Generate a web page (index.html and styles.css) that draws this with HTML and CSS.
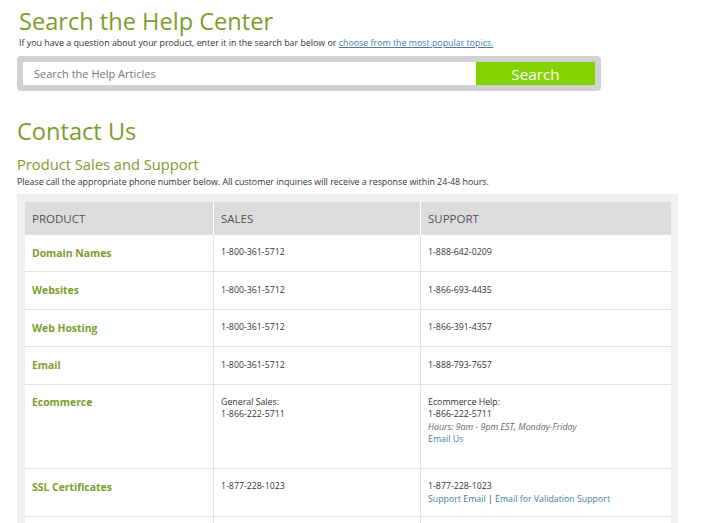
FILE: index.html
```html
<!DOCTYPE html>
<html>
<head>
<meta charset="utf-8">
<link rel="stylesheet" href="styles.css">
</head>
<body>
<div class="page">
  <h1 class="title">Search the Help Center</h1>
  <p class="intro">If you have a question about your product, enter it in the search bar below or <a href="#">choose from the most popular topics.</a></p>
  <div class="search">
    <div class="search-input">Search the Help Articles</div>
    <div class="search-btn">Search</div>
  </div>

  <h2 class="contact">Contact Us</h2>
  <h3 class="sub">Product Sales and Support</h3>
  <p class="note">Please call the appropriate phone number below. All customer inquiries will receive a response within 24-48 hours.</p>

  <div class="table-wrap">
    <table class="tbl">
      <thead>
        <tr><th class="c1">PRODUCT</th><th class="c2">SALES</th><th class="c3">SUPPORT</th></tr>
      </thead>
      <tbody>
        <tr><td class="prod">Domain Names</td><td>1-800-361-5712</td><td>1-888-642-0209</td></tr>
        <tr><td class="prod">Websites</td><td>1-800-361-5712</td><td>1-866-693-4435</td></tr>
        <tr><td class="prod">Web Hosting</td><td>1-800-361-5712</td><td>1-866-391-4357</td></tr>
        <tr><td class="prod">Email</td><td>1-800-361-5712</td><td>1-888-793-7657</td></tr>
        <tr class="tall"><td class="prod">Ecommerce</td><td>General Sales:<br>1-866-222-5711</td><td>Ecommerce Help:<br>1-866-222-5711<br><em>Hours: 9am - 9pm EST, Monday-Friday</em><br><a href="#">Email Us</a></td></tr>
        <tr class="mid"><td class="prod">SSL Certificates</td><td>1-877-228-1023</td><td>1-877-228-1023<br><a href="#">Support Email</a> | <a href="#">Email for Validation Support</a></td></tr>
        <tr><td class="prod">&nbsp;</td><td>&nbsp;</td><td>&nbsp;</td></tr>
      </tbody>
    </table>
  </div>
</div>
</body>
</html>
```

FILE: styles.css
```css
html, body {
  margin: 0;
  padding: 0;
  background: #fff;
}
body {
  font-family: "Open Sans", "Liberation Sans", sans-serif;
  color: #333;
}
.page {
  padding: 6px 0 0 17px;
  width: 661px;
}
.title {
  margin: 0 0 0 2px;
  font-size: 23.6px;
  font-weight: 400;
  line-height: 30px;
  color: #7b9d2c;
}
.intro {
  margin: 0 0 0 2px;
  font-size: 8.85px;
  line-height: 14px;
  color: #333;
}
.intro a, .tbl a {
  color: #4a7ba6;
}
.intro a {
  text-decoration: underline;
}
.tbl a {
  text-decoration: none;
}
.search {
  margin-top: 6px;
  width: 572px;
  border: 6px solid #d2d2d2;
  border-radius: 4px;
  background: #fff;
  display: flex;
  height: 23px;
}
.search-input {
  flex: 1;
  font-size: 11px;
  line-height: 23px;
  padding-left: 11px;
  color: #777;
}
.search-btn {
  width: 119px;
  background: #84d200;
  color: #fff;
  font-size: 15.3px;
  line-height: 24px;
  text-align: center;
}
.contact {
  margin: 25px 0 0 0;
  font-size: 23.6px;
  font-weight: 400;
  line-height: 30px;
  color: #7b9d2c;
}
.sub {
  margin: 8px 0 0 0;
  font-size: 14.7px;
  font-weight: 400;
  line-height: 20px;
  color: #7b9d2c;
}
.note {
  margin: 2px 0 0 0;
  font-size: 8.85px;
  line-height: 13px;
  color: #333;
}
.table-wrap {
  margin-top: 5px;
  background: #efefef;
  padding: 8px 7px 0 8px;
}
.tbl {
  width: 646px;
  border-collapse: collapse;
  background: #fff;
  table-layout: fixed;
}
.tbl th {
  background: #dcdcdc;
  text-align: left;
  font-weight: 400;
  font-size: 11.5px;
  color: #555;
  height: 32px;
  padding: 0 7px;
  border-left: 1px solid #fff;
}
.tbl th.c1 { width: 174px; border-left: none; }
.tbl th.c2 { width: 192px; }
.tbl td {
  vertical-align: top;
  padding: 11.4px 7px 12.7px 7px;
  font-size: 8.8px;
  line-height: 12.3px;
  border-top: 1px solid #e2e2e2;
  border-left: 1px solid #e2e2e2;
  color: #333;
}
.tbl td:first-child {
  border-left: none;
}
.tbl td.prod {
  font-weight: 700;
  font-size: 10.4px;
  color: #7b9d2c;
  padding-top: 11.8px;
  padding-bottom: 12.3px;
}
.tbl tr.tall td {
  padding-bottom: 22.8px;
}
.tbl tr.mid td {
  padding-bottom: 11.4px;
}
.tbl em {
  color: #666;
}
```
